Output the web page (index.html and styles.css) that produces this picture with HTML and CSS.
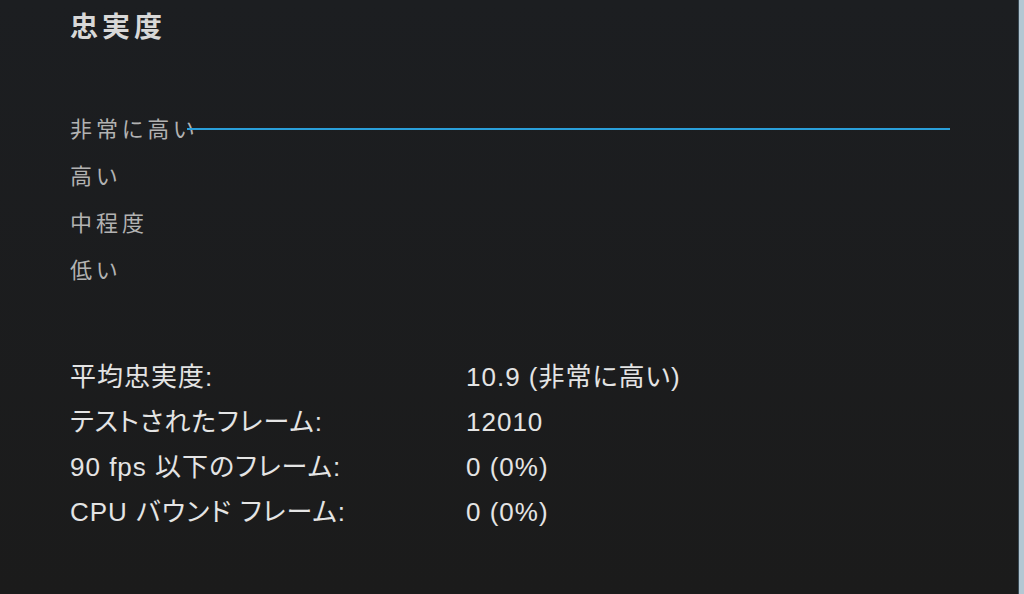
FILE: index.html
```html
<!DOCTYPE html>
<html lang="ja">
<head>
    <meta charset="UTF-8">
    <meta name="viewport" content="width=device-width, initial-scale=1.0">
    <title>忠実度</title>
    <link rel="stylesheet" href="styles.css">
</head>
<body>
    <div class="panel">
        <h1 class="title">忠実度</h1>

        <!-- Fidelity levels chart -->
        <div class="chart">
            <ul class="levels">
                <li>非常に高い</li>
                <li>高い</li>
                <li>中程度</li>
                <li>低い</li>
            </ul>
            <div class="trace"></div>
        </div>

        <!-- Summary -->
        <dl class="stats">
            <dt>平均忠実度:</dt>
            <dd>10.9 (非常に高い)</dd>
            <dt>テストされたフレーム:</dt>
            <dd>12010</dd>
            <dt>90 fps 以下のフレーム:</dt>
            <dd>0 (0%)</dd>
            <dt>CPU バウンド フレーム:</dt>
            <dd>0 (0%)</dd>
        </dl>
    </div>
    <div class="edge"></div>
</body>
</html>
```

FILE: styles.css
```css
html, body {
    height: 100%;
}
body {
    margin: 0;
    display: flex;
    background: linear-gradient(to bottom, #1c1e21, #1b1b1b);
    color: #e4e4e4;
    font-family: "Liberation Sans", "Noto Sans CJK JP", sans-serif;
    font-feature-settings: "palt";
    overflow: hidden;
}
.panel {
    flex: 1;
    padding: 10px 0 0 70px;
}
.title {
    margin: 0;
    font-size: 28px;
    line-height: 36px;
    font-weight: bold;
    letter-spacing: 4px;
    color: #d8d8d8;
}
.chart {
    position: relative;
    margin-top: 60px;
}
.levels {
    list-style: none;
    margin: 0;
    padding: 0;
    font-size: 22px;
    line-height: 47px;
    letter-spacing: 4px;
    color: #b2b2b2;
}
/* line sits on the level it reports */
.trace {
    position: absolute;
    top: 22px;
    left: 117px;
    width: 763px;
    height: 2px;
    background-color: #2a9fda;
}
.stats {
    display: grid;
    grid-template-columns: 396px auto;
    margin: 61px 0 0;
    font-size: 26px;
    line-height: 45px;
    letter-spacing: 1px;
}
.stats dt, .stats dd {
    margin: 0;
}
.edge {
    width: 5px;
    background-color: #b3c7d3;
    border-left: 1px solid #3b4b56;
}
```
